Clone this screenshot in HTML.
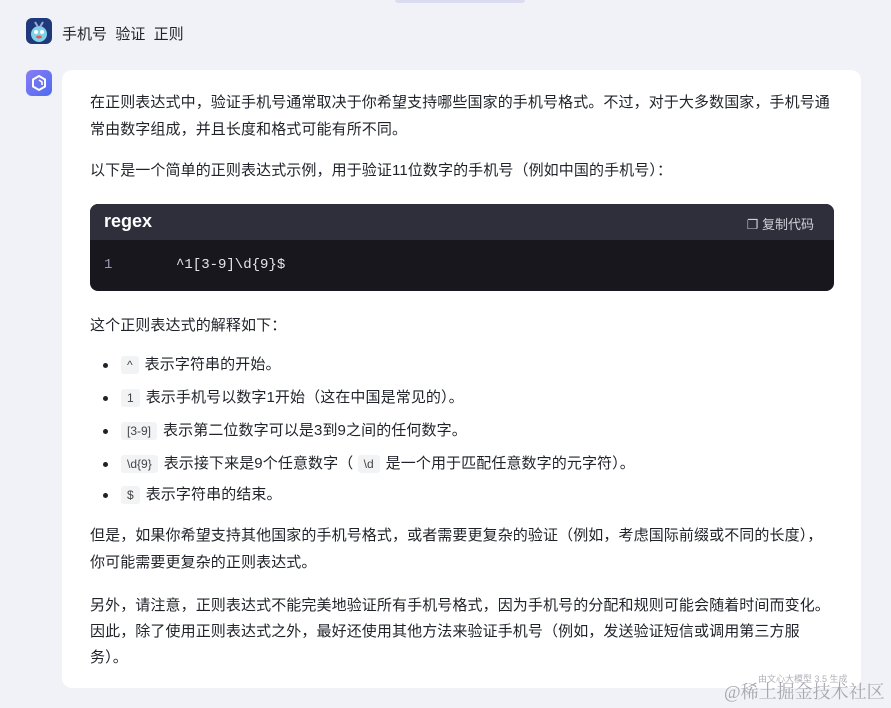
<!DOCTYPE html>
<html><head><meta charset="utf-8"><style>
*{margin:0;padding:0;box-sizing:border-box}
body{width:891px;height:708px;background:#f1f2f7;font-family:"Liberation Sans","Noto Sans CJK SC",sans-serif;color:#1f2329;position:relative;overflow:hidden;font-size:14px}
.topbar{position:absolute;left:395px;top:0;width:130px;height:3px;background:#dcdcf0;border-radius:0 0 4px 4px}
.av{position:absolute;left:26px;top:18px;width:26px;height:26px;border-radius:6px;background:#1f3a7a;overflow:hidden}
.q{position:absolute;left:62px;top:23px;font-size:15px;color:#1f2329;white-space:nowrap}
.bot{position:absolute;left:26px;top:70px;width:26px;height:26px;border-radius:6px;background:linear-gradient(135deg,#8a7cf5,#4d6cf0)}
.card{position:absolute;left:62px;top:70px;width:799px;height:618px;background:#fff;border-radius:10px}
.t{position:absolute;left:90px;font-size:15px;letter-spacing:.1px;line-height:20px;color:#1f2329;white-space:nowrap}
.code{position:absolute;left:90px;top:204px;width:744px;height:87px;background:#17171d;border-radius:8px;overflow:hidden}
.ch{height:36px;background:#2e2f3b;position:relative}
.ch b{position:absolute;left:14px;top:7px;color:#fff;font-size:18px;font-weight:bold}
.ch span{position:absolute;right:20px;top:10px;color:#d0d0d8;font-size:13px}
.cl{position:absolute;top:53px;font-family:"Liberation Mono","DejaVu Sans Mono",monospace;font-size:14px;color:#e6e6ea}
.dot{position:absolute;left:103px;width:5px;height:5px;border-radius:50%;background:#1f2329}
.c{background:#f2f3f5;border-radius:3px;padding:2px 6px;font-size:12px;letter-spacing:0;color:#444;margin-right:6px}
.wm{position:absolute;left:724px;top:678px;font-size:18px;color:#9a9aa4;font-family:"Liberation Serif","Noto Serif CJK SC",serif;opacity:.85;white-space:nowrap}
.gen{position:absolute;left:758px;top:672px;font-size:9px;color:#b0b0b8;white-space:nowrap}
</style></head><body>
<div class="topbar"></div>
<div class="av"><svg width="26" height="26"><circle cx="13" cy="16" r="8" fill="#7fd3e8"/><circle cx="10" cy="14" r="2" fill="#fff"/><circle cx="16" cy="14" r="2" fill="#fff"/><ellipse cx="13" cy="19" rx="3" ry="1.5" fill="#e55"/><path d="M9 4 L12 9 M17 4 L14 9" stroke="#9ad" stroke-width="2"/></svg></div>
<div class="q">手机号&nbsp;&nbsp;验证&nbsp;&nbsp;正则</div>
<div class="bot"><svg width="26" height="26"><path d="M13 6 L19 9.5 L19 16.5 L13 20 L7 16.5 L7 9.5Z" fill="none" stroke="#fff" stroke-width="2"/><path d="M13 10 L16 12 L16 15" fill="none" stroke="#fff" stroke-width="1.6"/></svg></div>
<div class="card"></div>
<div class="t" style="top:93px">在正则表达式中，验证手机号通常取决于你希望支持哪些国家的手机号格式。不过，对于大多数国家，手机号通</div>
<div class="t" style="top:120px">常由数字组成，并且长度和格式可能有所不同。</div>
<div class="t" style="top:161px">以下是一个简单的正则表达式示例，用于验证11位数字的手机号（例如中国的手机号）：</div>
<div class="code"><div class="ch"><b>regex</b><span>❐ 复制代码</span></div>
<div class="cl" style="left:14px;color:#9a9ab0">1</div><div class="cl" style="left:86px">^1[3-9]\d{9}$</div></div>
<div class="t" style="top:316px">这个正则表达式的解释如下：</div>
<div class="dot" style="top:363px"></div><div class="t" style="left:121px;top:355px"><span class="c">^</span>表示字符串的开始。</div>
<div class="dot" style="top:396px"></div><div class="t" style="left:121px;top:388px"><span class="c">1</span>表示手机号以数字1开始（这在中国是常见的）。</div>
<div class="dot" style="top:429px"></div><div class="t" style="left:121px;top:421px"><span class="c">[3-9]</span>表示第二位数字可以是3到9之间的任何数字。</div>
<div class="dot" style="top:462px"></div><div class="t" style="left:121px;top:454px"><span class="c">\d{9}</span>表示接下来是9个任意数字（ <span class="c">\d</span>是一个用于匹配任意数字的元字符）。</div>
<div class="dot" style="top:493px"></div><div class="t" style="left:121px;top:485px"><span class="c">$</span>表示字符串的结束。</div>
<div class="t" style="top:526px">但是，如果你希望支持其他国家的手机号格式，或者需要更复杂的验证（例如，考虑国际前缀或不同的长度），</div>
<div class="t" style="top:553px">你可能需要更复杂的正则表达式。</div>
<div class="t" style="top:596px">另外，请注意，正则表达式不能完美地验证所有手机号格式，因为手机号的分配和规则可能会随着时间而变化。</div>
<div class="t" style="top:622px">因此，除了使用正则表达式之外，最好还使用其他方法来验证手机号（例如，发送验证短信或调用第三方服</div>
<div class="t" style="top:648px">务）。</div>
<div class="gen">由文心大模型 3.5 生成</div>
<div class="wm">@稀土掘金技术社区</div>
</body></html>
